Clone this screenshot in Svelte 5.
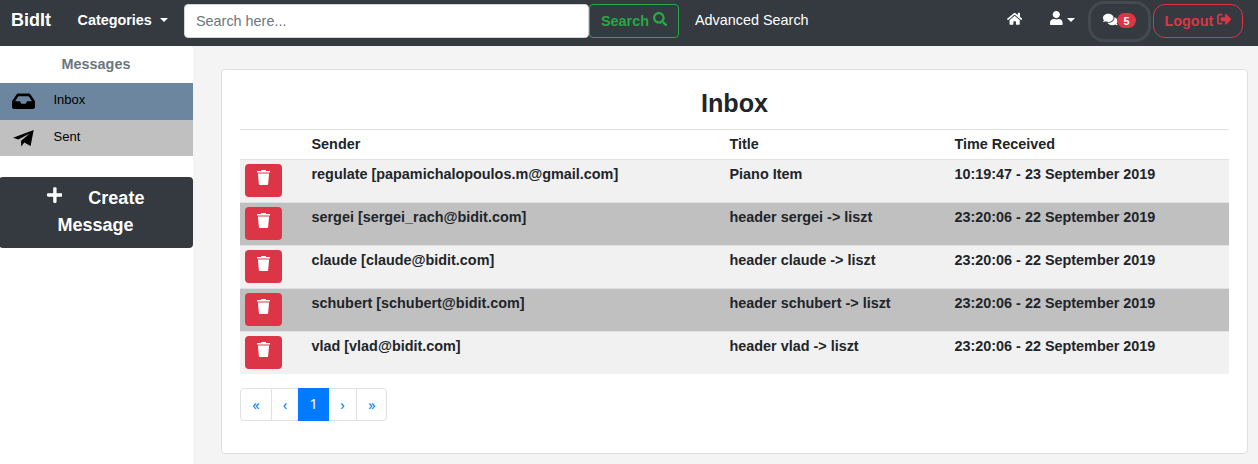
<script>
  const rows = [
    ['regulate [papamichalopoulos.m@gmail.com]', 'Piano Item', '10:19:47 - 23 September 2019'],
    ['sergei [sergei_rach@bidit.com]', 'header sergei -> liszt', '23:20:06 - 22 September 2019'],
    ['claude [claude@bidit.com]', 'header claude -> liszt', '23:20:06 - 22 September 2019'],
    ['schubert [schubert@bidit.com]', 'header schubert -> liszt', '23:20:06 - 22 September 2019'],
    ['vlad [vlad@bidit.com]', 'header vlad -> liszt', '23:20:06 - 22 September 2019']
  ];
  const icons = {
    home: [576, 'M280.37 148.26L96 300.11V464a16 16 0 0 0 16 16l112.06-.29a16 16 0 0 0 15.92-16V368a16 16 0 0 1 16-16h64a16 16 0 0 1 16 16v95.64a16 16 0 0 0 16 16.05L464 480a16 16 0 0 0 16-16V300L295.67 148.26a12.19 12.19 0 0 0-15.3 0zM571.6 251.47L488 182.56V44.05a12 12 0 0 0-12-12h-56a12 12 0 0 0-12 12v72.61L318.47 43a48 48 0 0 0-61 0L4.34 251.47a12 12 0 0 0-1.6 16.9l25.5 31A12 12 0 0 0 45.15 301l235.22-193.74a12.19 12.19 0 0 1 15.3 0L530.9 301a12 12 0 0 0 16.9-1.6l25.5-31a12 12 0 0 0-1.7-16.93z'],
    user: [448, 'M224 256c70.7 0 128-57.3 128-128S294.7 0 224 0 96 57.3 96 128s57.3 128 128 128zm89.6 32h-16.7c-22.2 10.2-46.9 16-72.9 16s-50.6-5.8-72.9-16h-16.7C60.2 288 0 348.2 0 422.4V464c0 26.5 21.5 48 48 48h352c26.5 0 48-21.5 48-48v-41.6c0-74.2-60.2-134.4-134.4-134.4z'],
    comments: [576, 'M416 192c0-88.4-93.1-160-208-160S0 103.6 0 192c0 34.3 14.1 65.9 38 92-13.4 30.2-35.5 54.2-35.8 54.5-2.2 2.3-2.8 5.7-1.5 8.7S4.8 352 8 352c36.6 0 66.9-12.3 88.7-25 32.2 15.7 70.3 25 111.3 25 114.9 0 208-71.6 208-160zm122 220c23.9-26 38-57.7 38-92 0-66.9-53.5-124.2-129.3-148.1.9 6.6 1.3 13.3 1.3 20.1 0 105.9-107.7 192-240 192-10.8 0-21.3-.8-31.7-1.9C207.8 439.6 281.8 480 368 480c41 0 79.1-9.2 111.3-25 21.8 12.7 52.1 25 88.7 25 3.2 0 6.1-1.9 7.3-4.8 1.3-2.9.7-6.3-1.5-8.7-.3-.3-22.4-24.2-35.8-54.5z'],
    inbox: [576, 'M567.938 243.908L462.25 85.374A48.003 48.003 0 0 0 422.311 64H153.689a48 48 0 0 0-39.938 21.374L8.062 243.908A47.994 47.994 0 0 0 0 270.533V400c0 26.51 21.49 48 48 48h480c26.51 0 48-21.49 48-48V270.533a47.994 47.994 0 0 0-8.062-26.625zM162.252 128h251.497l85.333 128H376l-32 64H232l-32-64H76.918l85.334-128z'],
    search: [512, 'M505 442.7L405.3 343c-4.5-4.5-10.6-7-17-7H372c27.6-35.3 44-79.7 44-128C416 93.1 322.9 0 208 0S0 93.1 0 208s93.1 208 208 208c48.3 0 92.7-16.4 128-44v16.3c0 6.4 2.5 12.5 7 17l99.7 99.7c9.4 9.4 24.6 9.4 33.9 0l28.3-28.3c9.4-9.4 9.4-24.6.1-34zM208 336c-70.7 0-128-57.2-128-128 0-70.7 57.2-128 128-128 70.7 0 128 57.2 128 128 0 70.7-57.2 128-128 128z'],
    signout: [512, 'M497 273L329 441c-15 15-41 4.5-41-17v-96H152c-13.3 0-24-10.7-24-24v-96c0-13.3 10.7-24 24-24h136V88c0-21.4 25.9-32 41-17l168 168c9.3 9.4 9.3 24.6 0 34zM192 436v-40c0-6.6-5.4-12-12-12H96c-17.7 0-32-14.3-32-32V160c0-17.7 14.3-32 32-32h84c6.6 0 12-5.4 12-12V76c0-6.6-5.4-12-12-12H96c-53 0-96 43-96 96v192c0 53 43 96 96 96h84c6.6 0 12-5.4 12-12z'],
    plus: [448, 'M416 208H272V64c0-17.67-14.33-32-32-32h-32c-17.67 0-32 14.33-32 32v144H32c-17.67 0-32 14.33-32 32v32c0 17.67 14.33 32 32 32h144v144c0 17.67 14.33 32 32 32h32c17.67 0 32-14.33 32-32V304h144c17.67 0 32-14.33 32-32v-32c0-17.67-14.33-32-32-32z']
  };
</script>

{#snippet icon(name, size)}
  <svg width={(icons[name][0] / 512) * size} height={size} viewBox="0 0 {icons[name][0]} 512" fill="currentColor"><path d={icons[name][1]} /></svg>
{/snippet}

<div class="page">
  <header>
    <a class="brand">BidIt</a>
    <a class="cats">Categories <i class="caret"></i></a>
    <input placeholder="Search here..." />
    <button class="search"><span>Search</span>{@render icon('search', 14.4)}</button>
    <a class="advanced">Advanced Search</a>
    <nav>
      <a class="home">{@render icon('home', 13.6)}</a>
      <a class="user">{@render icon('user', 14.4)}<i class="caret"></i></a>
      <a class="chat">{@render icon('comments', 13)}<b>5</b></a>
      <button class="logout"><span>Logout</span>{@render icon('signout', 14.4)}</button>
    </nav>
  </header>
  <div class="body">
    <aside>
      <h2>Messages</h2>
      <a class="item active"><span class="ic">{@render icon('inbox', 20.5)}</span>Inbox</a>
      <a class="item sent"><span class="ic"><svg width="21" height="17" viewBox="0 0 21 17"><path d="M20.7 0 0 7.7l5.3 1.8L16.8 3.4 8.1 10.7v5.9l3.2-4 6.3 3.4z" /></svg></span>Sent</a>
      <button class="create"><span class="plus">{@render icon('plus', 18)}</span>Create<br />Message</button>
    </aside>
    <main>
      <section>
        <h1>Inbox</h1>
        <div class="row head"><span></span><span>Sender</span><span>Title</span><span>Time Received</span></div>
        {#each rows as [sender, title, time]}
          <div class="row">
            <button class="del" aria-label="Delete">
              <svg width="13" height="15" viewBox="0 0 13 15" fill="#fff"><path d="M0 1h4V.5Q4 0 4.5 0h4Q9 0 9 .5V1h4v1.6H0zM.9 3.6h11.2l-1 10.6q-.1.8-1 .8H2.9q-.9 0-1-.8z" /></svg>
            </button>
            <span>{sender}</span><span>{title}</span><span>{time}</span>
          </div>
        {/each}
        <div class="pages">
          <a style:width="31px">«</a><a style:width="27px">‹</a><a class="on" style:width="31px">1</a><a style:width="28px">›</a><a style:width="30px">»</a>
        </div>
      </section>
    </main>
  </div>
</div>

<style>
  :global(body) { margin: 0; overflow: hidden; }
  * { box-sizing: border-box; }
  .page { height: 464px; display: flex; flex-direction: column; background: #f4f4f4; color: #212529; font: 14.4px/21.6px "Liberation Sans", Arial, sans-serif; }
  svg { display: block; flex: none; }
  button { font: inherit; font-weight: bold; cursor: pointer; }
  header { height: 46px; flex: none; background: #343a40; color: #fff; display: flex; align-items: flex-start; padding: 4px 15px 0 11px; }
  .brand { width: 66.5px; font-weight: bold; font-size: 18px; line-height: 32px; }
  .cats { width: 106.5px; font-weight: bold; line-height: 32px; display: flex; align-items: center; gap: 8px; }
  .caret { width: 0; border: 4.3px solid transparent; border-top-color: currentColor; border-bottom: 0; }
  input { width: 405px; height: 34px; padding: 0 11px; border: 1px solid #ced4da; border-radius: 4px; font: inherit; background: #fff; }
  input::placeholder { color: #6c757d; opacity: 1; }
  .search { width: 90px; height: 34px; padding: 0 11px; display: flex; gap: 4px; border: 1px solid #28a745; border-radius: 4px; color: #28a745; background: none; }
  .search span, .logout span { line-height: 32px; }
  .search svg, .logout svg { margin-top: 6.5px; }
  .advanced { margin-left: 16px; line-height: 32px; }
  nav { margin-left: auto; display: flex; align-items: flex-start; }
  .home { padding-top: 8px; margin-right: 28px; }
  .user { padding-top: 7px; display: flex; align-items: center; gap: 4.5px; }
  .user .caret { margin-top: 3px; }
  .chat { width: 63px; height: 41px; margin: -3px 2px 0 13px; border: 3px solid #454a52; border-radius: 16px; display: flex; padding: 9px 0 0 12px; }
  .chat b { width: 19px; height: 15px; border-radius: 8px; background: #dc3545; font-size: 10.8px; line-height: 16px; text-align: center; margin-left: -.5px; }
  .logout { width: 90px; height: 34px; padding: 0 10.5px; display: flex; gap: 4px; border: 1px solid #dc3545; border-radius: 12px; color: #dc3545; background: none; }
  .body { flex: 1; display: flex; min-height: 0; }
  aside { width: 193px; background: #fff; border-radius: 0 4px 0 0; }
  h2 { margin: 0; height: 37px; font-size: 14.4px; line-height: 37px; text-align: center; color: #6c757d; padding-right: 1px; }
  .item { height: 37px; display: flex; align-items: center; font-size: 13px; line-height: 18px; color: #000; padding-bottom: 3px; background: #6c86a0; }
  .sent { height: 36px; background: #c0c0c0; }
  .ic { width: 53.5px; display: flex; padding: 3px 0 0 12px; }
  .sent .ic { padding-left: 13px; }
  .create { width: 194px; height: 71px; margin: 21px 0 0 -1px; padding: 0 1px 1px 0; border: 0; border-radius: 4px; color: #fff; background: #343a40; font-size: 18px; line-height: 27px; }
  .plus { display: inline-block; margin-right: 26px; }
  main { flex: 1; padding: 23px 10px 10px 28px; }
  section { height: 385px; background: #fff; border: 1px solid #dfdfdf; border-radius: 4px; padding: 18px; }
  h1 { margin: 0; height: 41px; font-size: 25.2px; line-height: 31px; text-align: center; }
  .row { height: 43px; display: grid; grid-template-columns: 71.5px 418px 225px 1fr; border-top: 1px solid #dee2e6; font-weight: bold; line-height: 20px; padding-top: 4px; background: #f1f1f1; }
  .row.head { height: 30px; background: #fff; }
  .row:nth-child(even):not(.head) { background: #c0c0c0; }
  .del { width: 37px; height: 33px; margin-left: 5px; padding: 6px 12px; border: 0; border-radius: 4px; background: #dc3545; display: flex; }
  .pages { display: flex; width: 147px; height: 33px; margin-top: 14px; border: 1px solid #dee2e6; border-radius: 4px; }
  .pages a { flex: none; color: #007bff; text-align: center; line-height: 31px; border-right: 1px solid #dee2e6; font-family: "Noto Sans", sans-serif; }
  .pages a:last-child { border: 0; }
  .pages .on { background: #007bff; color: #fff; margin: -1px 0 -1px -1px; border: 0; line-height: 31px; }
</style>
